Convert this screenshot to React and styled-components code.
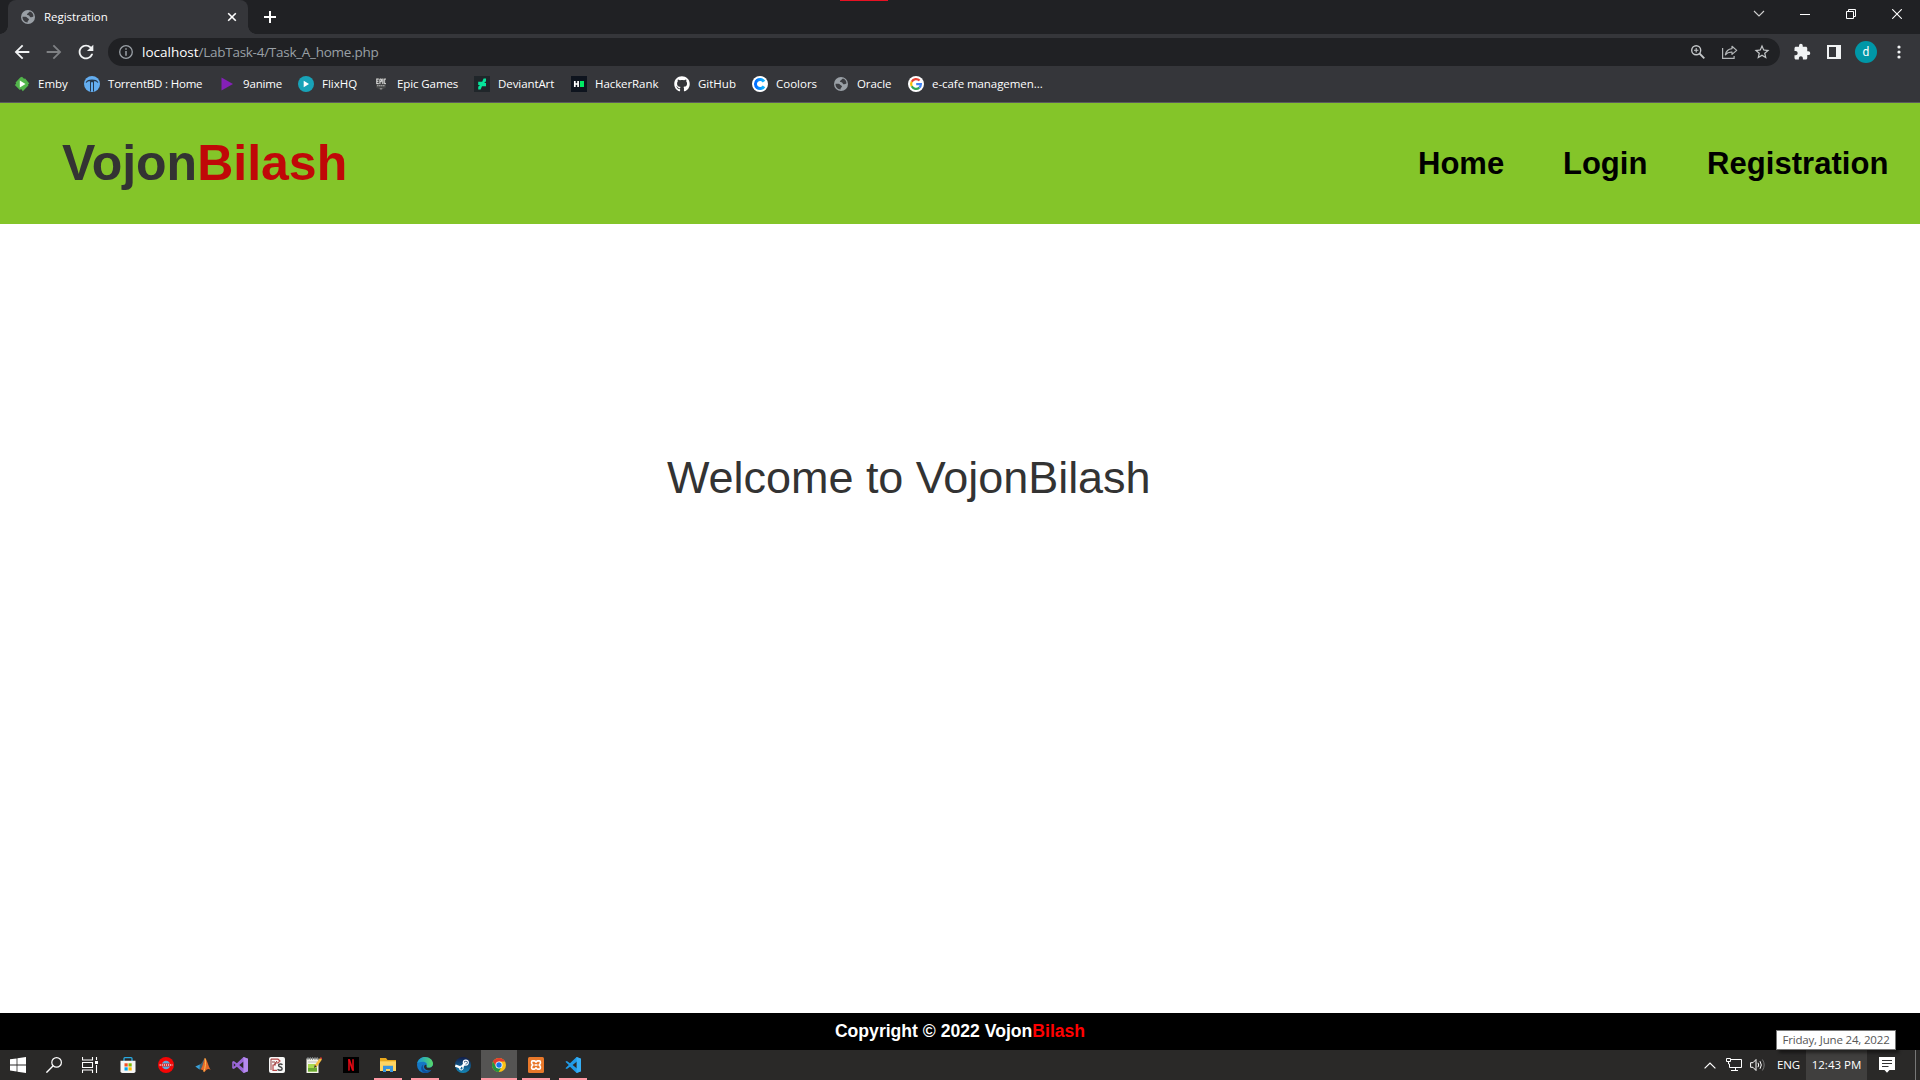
import React from "react";
import styled, { createGlobalStyle } from "styled-components";
import { MdArrowBack, MdArrowForward, MdRefresh, MdStarBorder, MdExtension } from "react-icons/md";
import { FaGithub } from "react-icons/fa";

const GlobalStyle = createGlobalStyle`
  * { box-sizing: border-box; }
  body { margin: 0; background: #fff; overflow: hidden; }
  svg { display: block; flex: none; }
`;

const UI_FONT = `"Open Sans", "Noto Sans", sans-serif`;
const PAGE_FONT = `"Liberation Sans", Arial, sans-serif`;

const Screen = styled.div`
  width: 1920px;
  height: 1080px;
  display: flex;
  flex-direction: column;
  position: relative;
  font-family: ${UI_FONT};
`;

/* ---------- browser frame ---------- */
const TabStrip = styled.div`
  height: 34px;
  display: flex;
  align-items: stretch;
  background: #202124;
`;
const RecordingMark = styled.div`
  position: absolute;
  left: 840px;
  top: 0;
  width: 48px;
  height: 1px;
  background: #e81123;
`;
const Flare = styled.div`
  width: 8px;
  height: 8px;
  align-self: flex-end;
  background: radial-gradient(circle at ${(p) => (p.$side === "left" ? "0 0" : "100% 0")}, #202124 7.5px, #35363a 8px);
`;
const Tab = styled.div`
  width: 240px;
  display: flex;
  align-items: center;
  padding: 0 11px 0 12px;
  background: #35363a;
  border-radius: 8px 8px 0 0;
  color: #fff;
`;
const TabTitle = styled.span`
  flex: 1;
  margin-left: 8px;
  font-size: 11.5px;
  line-height: 16px;
  letter-spacing: ${(p) => p.$track}px;
  white-space: nowrap;
`;
const NewTab = styled.div`
  width: 28px;
  display: flex;
  align-items: center;
  justify-content: center;
`;
const WindowControls = styled.div`
  margin-left: auto;
  display: flex;
`;
const WindowButton = styled.div`
  width: 46px;
  height: 28px;
  display: flex;
  align-items: center;
  justify-content: center;
`;
const Toolbar = styled.div`
  height: 36px;
  display: flex;
  align-items: center;
  background: #35363a;
  padding: 0 6px;
`;
const ToolButton = styled.div`
  width: 32px;
  height: 32px;
  display: flex;
  align-items: center;
  justify-content: center;
  padding: ${(p) => p.$nudge || 0};
  color: ${(p) => p.$color || "#f1f3f4"};
`;
const Omnibox = styled.div`
  flex: 1;
  height: 28px;
  margin: 0 6px;
  padding: 0 2px;
  display: flex;
  align-items: center;
  border-radius: 14px;
  background: #202124;
`;
const Url = styled.span`
  flex: 1;
  font-size: 13.5px;
  line-height: 20px;
  letter-spacing: ${(p) => p.$track}px;
  color: #9aa0a6;
  white-space: nowrap;
`;
const Host = styled.span`
  color: #fff;
  letter-spacing: 0;
`;
const Avatar = styled.div`
  width: 22px;
  height: 22px;
  border-radius: 50%;
  background: #0097a7;
  color: #fff;
  font: 12px/23px Roboto, sans-serif;
  text-align: center;
`;
const BookmarkBar = styled.div`
  height: 33px;
  padding: 0 0 4px 14px;
  display: flex;
  align-items: center;
  background: #35363a;
  border-bottom: 1px solid #5a5b5e;
`;
const Bookmark = styled.div`
  width: ${(p) => p.$w}px;
  display: flex;
  align-items: center;
  gap: 8px;
  color: #fff;
`;
const BookmarkName = styled.span`
  font-size: 11.5px;
  line-height: 16px;
  letter-spacing: ${(p) => p.$track}px;
  white-space: nowrap;
`;

/* ---------- page ---------- */
const SiteHeader = styled.header`
  height: 121px;
  padding: 0 30px 0 62px;
  display: flex;
  align-items: center;
  justify-content: space-between;
  background: #84c529;
  font-family: ${PAGE_FONT};
  font-weight: 700;
`;
const Brand = styled.div`
  padding-bottom: 2px;
  font-size: 50px;
  line-height: 58px;
  color: #333;
`;
const BrandAccent = styled.span`
  color: ${(p) => p.$color};
`;
const Nav = styled.nav`
  display: flex;
`;
const NavLink = styled.a`
  width: ${(p) => p.$w}px;
  font-size: 31px;
  line-height: 36px;
  letter-spacing: ${(p) => p.$track}px;
  color: #000;
  white-space: nowrap;
`;
const Main = styled.main`
  flex: 1;
  padding: 229px 0 0 667px;
  background: #fff;
`;
const Welcome = styled.div`
  font-family: ${PAGE_FONT};
  font-size: 45px;
  line-height: 50px;
  letter-spacing: -0.04px;
  color: #333;
  white-space: nowrap;
`;
const SiteFooter = styled.footer`
  height: 37px;
  padding-bottom: 1px;
  display: flex;
  align-items: center;
  justify-content: center;
  background: #000;
  color: #fff;
  font-family: ${PAGE_FONT};
  font-weight: 700;
  font-size: 17.6px;
  line-height: 20px;
  white-space: nowrap;
`;

/* ---------- taskbar ---------- */
const Taskbar = styled.div`
  height: 30px;
  display: flex;
  background: #2a2928;
  color: #fff;
`;
const TaskItem = styled.div`
  width: ${(p) => p.$w}px;
  display: flex;
  align-items: center;
  justify-content: center;
  background: ${(p) => (p.$active ? "linear-gradient(#555453 0 28px, #ff99a4 28px)" : p.$open ? "linear-gradient(#ff99a4, #ff99a4) center bottom / 28px 2px no-repeat" : "none")};
`;
const Tray = styled.div`
  margin-left: auto;
  display: flex;
  align-items: center;
  font-size: 11.5px;
  line-height: 16px;
`;
const TrayCell = styled.div`
  width: ${(p) => p.$w}px;
  height: 30px;
  display: flex;
  align-items: center;
  justify-content: center;
  letter-spacing: ${(p) => p.$track || 0}px;
  white-space: nowrap;
  background: ${(p) => p.$bg || "none"};
`;
const DesktopEdge = styled.div`
  width: 5px;
  height: 30px;
  margin-left: 8px;
  border-left: 1px solid #777;
`;
const DateTip = styled.div`
  position: absolute;
  left: 1776px;
  top: 1030px;
  width: 120px;
  height: 20px;
  border: 1px solid #767676;
  background: #fff;
  color: #575757;
  font-size: 11.5px;
  line-height: 18px;
  text-align: center;
  letter-spacing: -0.17px;
  white-space: nowrap;
  box-shadow: 3px 3px 3px rgba(0, 0, 0, 0.45);
`;

const Svg = ({ s = 16, w, h, vb, children, ...rest }) => (
  <svg width={w || s} height={h || s} viewBox={vb || `0 0 ${w || s} ${h || s}`} fill="none" {...rest}>
    {children}
  </svg>
);

const Globe = () => (
  <Svg>
    <circle cx="8" cy="8" r="7" fill="#9aa0a6" />
    <path d="M9.300 2.600 C7.400 3 7.900 4.200 6.900 4.700 C6 5.300 6.500 6.300 7.600 6.400 C9 6.500 9.300 7.300 9.900 8 C10.700 8.700 12 8.300 13.500 7.500 C13.800 10.200 12 12.600 9.300 13.300 L7.600 13.500 C7.500 12.200 8.600 11.900 8.500 10.700 C8.400 9.700 7.200 9.900 6.500 9.300 C5.900 8.600 5.600 7.900 4.600 7.900 L2.500 7.800 C2.300 4.500 5.500 1.900 9.300 2.600Z" fill="#9aa0a6" />
    <path d="M10 2.600 C8.600 3 8.700 4.200 7.600 4.500 C6.600 4.900 6.600 5.900 7.600 6.100 C9 6.300 9.400 6.800 9.900 7.800 C10.500 8.700 12.200 8.400 13.400 7.600 C13.700 5.400 12.300 3.400 10 2.600Z" fill="#3c3d41" />
    <path d="M2.500 7.700 L5.600 7.800 C6.900 8 7 9.200 8.200 9.400 C9.400 9.700 9.100 11 8.300 11.500 C7.700 11.900 7.500 12.600 7.600 13.500 C4.600 13.300 2.400 10.900 2.500 7.700Z" fill="#3c3d41" />
  </Svg>
);

const icons = {
  emby: (
    <Svg><path d="M6.200 1.500 8 .8l2 2 1.200-.4 4.100 5L14 8.600l.4 1-5.600 5.700L7.200 13l-1.400.9L.8 9l1.300-1.300-.5-1.100z" fill="#52b54b" /><path d="M5.800 4.600v6.800L11.500 8z" fill="#fff" /></Svg>
  ),
  torrent: (
    <Svg><circle cx="8" cy="8" r="8" fill="#64aef0" /><path d="M1.600 6.400C2.800 4.200 5 3.600 8 3.600s5.200.6 6.400 2.800l-1 .4c-.8-1.200-1.900-1.500-3.400-1.500V15.600H9V6.300H7v9.300H6V5.300c-1.500 0-2.600.3-3.400 1.500z" fill="#26384c" /></Svg>
  ),
  anime: <Svg><path d="M2.500 1.500 14 8 2.500 14.500z" fill="#8420b8" /></Svg>,
  flix: <Svg><circle cx="8" cy="8" r="8" fill="#18a3b8" /><path d="M5.700 4.800v6.400L11 8z" fill="#fff" /></Svg>,
  epic: (
    <Svg><path d="M3 2h10v9.600L8 14.300 3 11.600z" fill="#464747" /><path d="M3.800 2.600v5.400M3.800 3.100h2M3.800 5.300h1.600M3.800 7.600h2M6.900 8V3.100h1.500v2.600H7M9.800 2.600v5.400M12.900 3.100h-1.700v4.500h1.700" stroke="#e2e2e2" strokeWidth="1" /><path d="M4 9.800h8" stroke="#b5b5b5" strokeWidth="1.100" strokeDasharray="1.6 .4" /><path d="M6.300 12.400h3.400L8 13.500z" fill="#c8c8c8" /></Svg>
  ),
  deviant: (
    <Svg><path d="M0 0h16v16H0z" fill="#20262a" /><path d="M12 2.500v2.700L10.200 7H12v3.200H8l-1.400 3.300H4.200v-2.700L6 9H4.200V5.800h4L9.600 2.500z" fill="#06e59b" /></Svg>
  ),
  hacker: (
    <Svg><path d="M0 0h16v16H0z" fill="#0e141e" /><path d="M3.800 5v6M7.100 5v6M3.800 8h3" stroke="#fff" strokeWidth="1.700" /><path d="M9 5h4v6H9z" fill="#00ea64" /></Svg>
  ),
  github: <FaGithub size={16} color="#fff" />,
  coolors: (
    <Svg><defs><linearGradient id="co" x2="1"><stop stopColor="#006bff" /><stop offset="1" stopColor="#11b7ff" /></linearGradient></defs><circle cx="8" cy="8" r="8" fill="#fff" /><path d="M12 5.600A4.600 4.600 0 1 0 12 10.400" stroke="url(#co)" strokeWidth="3" /></Svg>
  ),
  oracle: <Globe />,
  google: (
    <Svg><circle cx="8" cy="8" r="8" fill="#fff" /><g strokeWidth="2.200"><path d="M11.600 4.600A4.900 4.900 0 0 0 3.700 5.700" stroke="#ea4335" /><path d="M3.700 5.700a4.900 4.900 0 0 0 0 4.600" stroke="#fbbc05" /><path d="M3.700 10.300a4.900 4.900 0 0 0 7.600 1.300" stroke="#34a853" /><path d="M11.300 11.600A4.600 4.600 0 0 0 12.900 8.200H8.200" stroke="#4285f4" /></g></Svg>
  ),
};

const bookmarks = [
  { name: "Emby", icon: "emby", w: 70, t: 0 },
  { name: "TorrentBD : Home", icon: "torrent", w: 135, t: -0.2 },
  { name: "9anime", icon: "anime", w: 79, t: -0.15 },
  { name: "FlixHQ", icon: "flix", w: 75, t: 0 },
  { name: "Epic Games", icon: "epic", w: 101, t: -0.1 },
  { name: "DeviantArt", icon: "deviant", w: 97, t: -0.08 },
  { name: "HackerRank", icon: "hacker", w: 103, t: -0.08 },
  { name: "GitHub", icon: "github", w: 78, t: 0 },
  { name: "Coolors", icon: "coolors", w: 81, t: 0 },
  { name: "Oracle", icon: "oracle", w: 75, t: -0.08 },
  { name: "e-cafe managemen...", icon: "google", w: 140, t: -0.06 },
];

const apps = [
  { w: 36, icon: <Svg><path d="M0 2.300 6.600 1.400v6.100H0zM7.400 1.300 16 0v7.500H7.400zM0 8.400h6.600v6.100L0 13.600zM7.400 8.400H16V16l-8.600-1.300z" fill="#fff" /></Svg> },
  { w: 36, icon: <Svg><circle cx="10.6" cy="5.4" r="4.8" stroke="#fff" strokeWidth="1.200" /><path d="M7.200 8.800.4 15.600" stroke="#fff" strokeWidth="1.400" /></Svg> },
  { w: 36, icon: <Svg><path d="M.5 0v3h10V0M.5 16v-3h10v3M.5 5.500h10v5H.5zM14.500 0v3M14.500 8v8" stroke="#fff" strokeWidth="1.100" /><path d="M13 4h3v3h-3z" fill="#fff" /></Svg> },
  { w: 40, icon: <Svg><path d="M4 4V1.600q0-.9.900-.9h6.200q.9 0 .9.900V4" stroke="#29a9e0" strokeWidth="1.300" /><path d="M.5 3.700h15v10.500q0 1.800-1.800 1.800H2.300Q.5 16 .5 14.200z" fill="#f5f5f5" /><path d="M4.500 6.300h3.200v3.200H4.500z" fill="#f25022" /><path d="M8.500 6.300h3.200v3.200H8.500z" fill="#7fba00" /><path d="M4.500 10.300h3.200v3.200H4.500z" fill="#00a4ef" /><path d="M8.500 10.300h3.200v3.200H8.500z" fill="#ffb900" /></Svg> },
  { w: 36, icon: <Svg><circle cx="8" cy="8" r="8" fill="#f50505" /><circle cx="8" cy="8" r="4.300" fill="#5aa9dd" /><path d="M1 6.500h14v3H1z" fill="#e01818" /><path d="M1.600 8h13" stroke="#f3dada" strokeWidth="1.500" strokeDasharray="1.2 .9" /></Svg> },
  { w: 38, icon: <Svg><path d="M.3 9.400 4.800 7.500l2.300 2-2.600 3z" fill="#39a0d8" /><path d="M4.800 7.500C7 6.800 8 3.200 9.900 1L7.600 9.800l-3.100 2.700z" fill="#3b6074" /><path d="M9.900 1c1.700.2 3.500 8.600 5.800 12-2.300-2-4-.8-6.500 2.300-.6-1.700-1.700-3-4-2.700C7.700 11 8.400 4 9.900 1z" fill="#e5692b" /><path d="M10 1.400c1 2.700.4 9.800-1.200 13.200" stroke="#ffbf4f" strokeWidth="1" /></Svg> },
  { w: 36, icon: <Svg><path d="M11.500 0 16 1.800v12.400L11.500 16 4.900 9.700 1.800 12 .2 11.200V4.800L1.800 4l3.100 2.300zM11.600 4.400 7.200 8l4.400 3.600zM1.800 6.200v3.600L3.700 8z" fill="#9a67d8" fillRule="evenodd" /><path d="M11.500 0 16 1.800v12.400L11.500 16z" fill="#b58aee" /></Svg> },
  { w: 38, icon: <Svg><rect width="16" height="16" rx="2" fill="#f7f7f7" /><path d="M2 2.200h7l2 1.800-2.200 2H6.200v2H4v5.400h4" stroke="#b74545" strokeWidth="1.200" /><path d="M2 2v11M3 5h3M8 4l-3 4" stroke="#934040" /><path d="M13.500 7.800Q12.500 6.800 11 7c-2 .2-1.800 2.400 0 2.800 2.800.6 2.800 3.300.3 3.500q-1.600.1-2.800-.9" stroke="#444" strokeWidth="1.400" /></Svg> },
  { w: 36, icon: <Svg><path d="M.5 1.500h12V16H.5z" fill="#f4f4ea" /><path d="M2 7h9v7.500H2z" fill="#a8d84e" /><path d="M2 11h9v3.500H2z" fill="#69a832" /><path d="M2 0v3M4.300 0v3M6.600 0v3M9 0v3M11.200 0v3" stroke="#7e8588" /><path d="M2 5h9" stroke="#bbb" /><path d="m8 11 .8-3L14 1l2 1.400-5 7.200z" fill="#f2bc42" /><path d="m14 1 .8-1 1.200 1.100V2.400z" fill="#da3434" /><path d="m8 11 .8-3 1.900 1.600z" fill="#333" /></Svg> },
  { w: 38, icon: <Svg><path d="M0 0h16v16H0z" fill="#000" /><path d="M5 2.300h2v11.300l-2 .2zM9 2.300h2v11.500l-2-.2z" fill="#b00710" /><path d="M5 2.300h2l4 11.500-2-.2z" fill="#e50914" /></Svg> },
  { w: 36, open: true, icon: <Svg><path d="M0 1h6l1.500 2H16v11H0z" fill="#e9a81c" /><path d="M0 4.300h16V14H0z" fill="#ffd561" /><path d="M3 15V8.800h10V15h-3v-3H6v3z" fill="#3a95dc" /></Svg> },
  { w: 38, open: true, icon: <Svg><defs><linearGradient id="ed" x2="1"><stop stopColor="#1696db" /><stop offset="1" stopColor="#59da65" /></linearGradient></defs><circle cx="8" cy="8" r="8" fill="#1577c5" /><path d="M.2 6.500C1 2.500 4.300 0 8 0c4.500 0 8 3 8 6.800 0 2.500-2 4-4.400 4-2 0-2.800-.8-2-1.800C10.600 7 9 4.800 6 4.800 3.300 4.800 1 5.600.2 6.500z" fill="url(#ed)" /><path d="M6.400 7.500c-1.700 3.500 1 7 5 6.800 1.300 0 2.400-.5 3.100-1.200-1.300 2-3.600 2.900-6.500 2.900-3.700-.8-5.500-6-1.600-8.500z" fill="#114f9b" /><path d="M9.700 8.900c-1.300 1.600 1.700 2.600 4.600 1.300l1.700-1.600v2.200l-1.500 2.300c-3 1.300-6.700-.2-7.400-2.500-.3-1.800.8-3 2-2.700z" fill="#2a2928" /></Svg> },
  { w: 37, icon: <Svg><defs><linearGradient id="st" y2="1" x2="0"><stop stopColor="#111d4b" /><stop offset="1" stopColor="#1387b8" /></linearGradient></defs><circle cx="8" cy="8" r="8" fill="url(#st)" /><path d="M.3 8.500 6 10.700M7 10l3-4" stroke="#fff" strokeWidth="2.400" /><circle cx="10.8" cy="5.600" r="2.500" stroke="#fff" strokeWidth="1.200" /><circle cx="10.8" cy="5.600" r="1.200" fill="#fff" /><circle cx="6.200" cy="11" r="2" stroke="#fff" /></Svg> },
  { w: 36, active: true, icon: <Svg s={14} vb="0 0 16 16"><circle cx="8" cy="8" r="8" fill="#fbc116" /><path d="M1.100 4A8 8 0 0 1 14.900 4H8L4.500 10z" fill="#e33b2e" /><path d="M1.100 4A8 8 0 0 0 7.500 16l3.700-6.100L8 11.700 4.600 10z" fill="#229342" /><circle cx="8" cy="8" r="4" fill="#fff" /><circle cx="8" cy="8" r="3.100" fill="#1a73e8" /></Svg> },
  { w: 38, open: true, icon: <Svg><rect width="16" height="16" rx="1.500" fill="#e9782a" /><path d="M4.600 3.900h1.600c1.400 0 1.400 1.300 1.800 1.300s.4-1.300 1.800-1.300h1.600q1 0 1 1v1.200c0 1.300-1.200 1.200-1.200 1.900s1.200.6 1.200 1.900v1.200q0 1-1 1H9.800c-1.400 0-1.400-1.300-1.800-1.300s-.4 1.300-1.800 1.300H4.600q-1 0-1-1V9.900c0-1.300 1.200-1.200 1.200-1.900s-1.200-.6-1.200-1.900V4.900q0-1 1-1z" stroke="#fff" strokeWidth="1.600" /><path d="M6.500 8h3" stroke="#fff" strokeWidth="1.600" /></Svg> },
  { w: 36, open: true, icon: <Svg><path d="M11.600 0 16 1.800v12.400L11.600 16 5 9.700 1.900 12 .4 11.200 3.800 8 .4 4.800 1.900 4 5 6.300zM12 4.600 7.600 8l4.400 3.400z" fill="#209be8" fillRule="evenodd" /><path d="M11.600 0 16 1.800v12.400L11.600 16z" fill="#36aef5" /></Svg> },
];

export default function App() {
  return (
    <Screen>
      <GlobalStyle />
      <TabStrip>
        <Flare $side="left" />
        <Tab>
          <Globe />
          <TabTitle $track={-0.05}>Registration</TabTitle>
          <Svg s={10}><path d="m1.200 1.200 7.600 7.600M8.800 1.200 1.200 8.800" stroke="#fff" strokeWidth="1.600" /></Svg>
        </Tab>
        <Flare $side="right" />
        <NewTab><Svg s={12}><path d="M6 0v12M0 6h12" stroke="#fff" strokeWidth="2" /></Svg></NewTab>
        <WindowControls>
          <WindowButton><Svg w={12} h={8}><path d="m1 1 5 5 5-5" stroke="#d0d0d0" strokeWidth="1.100" /></Svg></WindowButton>
          <WindowButton><Svg s={10}><path d="M0 5.500h10" stroke="#fff" /></Svg></WindowButton>
          <WindowButton><Svg s={10}><path d="M.5 2.500h7v7h-7zM2.500 2V.5h7v7H8" stroke="#fff" /></Svg></WindowButton>
          <WindowButton><Svg s={10}><path d="m.2.2 9.600 9.600M9.800.2.2 9.800" stroke="#fff" strokeWidth="1.100" /></Svg></WindowButton>
        </WindowControls>
      </TabStrip>
      <Toolbar>
        <ToolButton><MdArrowBack size={22} /></ToolButton>
        <ToolButton $color="#7f8184"><MdArrowForward size={22} /></ToolButton>
        <ToolButton><MdRefresh size={22} /></ToolButton>
        <Omnibox>
          <ToolButton $color="#9aa0a6">
            <Svg s={14}><circle cx="7" cy="7" r="6.300" stroke="currentColor" strokeWidth="1.300" /><path d="M7 3.200v1.500M7 6v4.800" stroke="currentColor" strokeWidth="1.500" /></Svg>
          </ToolButton>
          <Url $track={-0.27}><Host>localhost</Host>/LabTask-4/Task_A_home.php</Url>
          <ToolButton $color="#c4c7c9">
            <Svg s={14}><circle cx="5.200" cy="5.200" r="4.500" stroke="currentColor" strokeWidth="1.400" /><path d="m8.500 8.500 4.800 4.800" stroke="currentColor" strokeWidth="1.800" /><path d="M5.200 3v4.400M3 5.200h4.400" stroke="currentColor" strokeWidth="1.100" /></Svg>
          </ToolButton>
          <ToolButton $color="#b4b7b9">
            <Svg w={16} h={14}><path d="M.6 3v10.400h11.500V11" stroke="currentColor" strokeWidth="1.200" /><path d="M10 1.300 14.700 5.400 10 9.400V7.200C7 7 5 7.800 3.400 9.800 4 6.200 6 4 10 3.600z" stroke="currentColor" strokeWidth="1.200" strokeLinejoin="round" /></Svg>
          </ToolButton>
          <ToolButton $color="#c4c7c9"><MdStarBorder size={18} /></ToolButton>
        </Omnibox>
        <ToolButton><MdExtension size={18} /></ToolButton>
        <ToolButton><Svg s={14}><path d="M0 0h14v14H0zM2 2v10h7V2z" fill="#f1f3f4" fillRule="evenodd" /></Svg></ToolButton>
        <ToolButton><Avatar>d</Avatar></ToolButton>
        <ToolButton $nudge="0 0 0 1px"><Svg w={4} h={14}><g fill="#f1f3f4"><circle cx="2" cy="2" r="1.600" /><circle cx="2" cy="7" r="1.600" /><circle cx="2" cy="12" r="1.600" /></g></Svg></ToolButton>
      </Toolbar>
      <BookmarkBar>
        {bookmarks.map((b) => (
          <Bookmark key={b.name} $w={b.w}>
            {icons[b.icon]}
            <BookmarkName $track={b.t}>{b.name}</BookmarkName>
          </Bookmark>
        ))}
      </BookmarkBar>

      <SiteHeader>
        <Brand>Vojon<BrandAccent $color="#c00808">Bilash</BrandAccent></Brand>
        <Nav>
          <NavLink $w={145} $track={0}>Home</NavLink>
          <NavLink $w={144} $track={0}>Login</NavLink>
          <NavLink $w={183} $track={0.05}>Registration</NavLink>
        </Nav>
      </SiteHeader>
      <Main>
        <Welcome>Welcome to VojonBilash</Welcome>
      </Main>
      <SiteFooter>
        <span>Copyright © 2022 Vojon<BrandAccent $color="#f00">Bilash</BrandAccent></span>
      </SiteFooter>

      <Taskbar>
        {apps.map((a, i) => (
          <TaskItem key={i} $w={a.w} $active={a.active} $open={a.open}>{a.icon}</TaskItem>
        ))}
        <Tray>
          <TrayCell $w={26}><Svg w={12} h={7}><path d="m.6 6.400 5.400-5.400 5.400 5.400" stroke="#fff" strokeWidth="1.200" /></Svg></TrayCell>
          <TrayCell $w={22}><Svg w={16} h={14}><path d="M5 1.500h10.500v8H3.500V6M9.500 9.500v3M5 12.500h7" stroke="#fff" /><path d="M.5.5h4v3h-4zM2.500 3.500V6h1" stroke="#fff" /></Svg></TrayCell>
          <TrayCell $w={26}><Svg w={16} h={14}><path d="M.6 4.700H3L6 1.500v11L3 9.300H.6z" stroke="#fff" /><path d="M8 4.800q1.400 2.200 0 4.400M10 3.200q2.600 3.800 0 7.600" stroke="#fff" /><path d="M12.400 1.500q3.600 5.500 0 11" stroke="#777" /></Svg></TrayCell>
          <TrayCell $w={35} $track={-0.1}>ENG</TrayCell>
          <TrayCell $w={61} $bg="#403f3e">12:43 PM</TrayCell>
          <TrayCell $w={40}><Svg s={16}><path d="M0 0h16v13h-5.500L8 15.800 5.500 13H0z" fill="#fff" /><path d="M3 3.500h10M3 6.500h10M3 9.500h6.500" stroke="#333" /></Svg></TrayCell>
          <DesktopEdge />
        </Tray>
      </Taskbar>
      <DateTip>Friday, June 24, 2022</DateTip>
      <RecordingMark />
    </Screen>
  );
}
